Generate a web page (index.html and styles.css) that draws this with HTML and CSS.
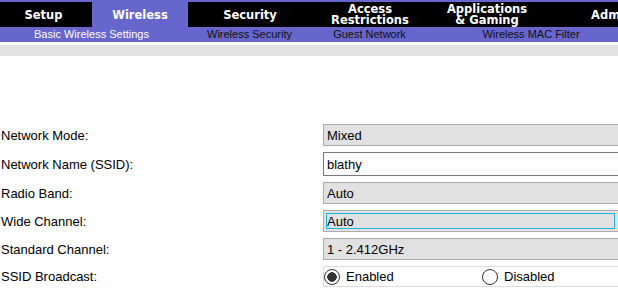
FILE: index.html
```html
<!DOCTYPE html>
<html lang="en">
<head>
    <meta charset="UTF-8">
    <title>Basic Wireless Settings</title>
    <link rel="stylesheet" href="styles.css">
</head>
<body>
    <div class="header">
        <div class="tabs">
            <div class="tab one t-setup">Setup</div>
            <div class="tab one active t-wireless">Wireless</div>
            <div class="tab one t-security">Security</div>
            <div class="tab t-access">Access<br>Restrictions</div>
            <div class="tab t-apps">Applications<br>&amp; Gaming</div>
            <div class="tab one t-admin">Administration</div>
        </div>
        <div class="subnav">
            <a class="sub current s1">Basic Wireless Settings</a>
            <a class="sub s2">Wireless Security</a>
            <a class="sub s3">Guest Network</a>
            <a class="sub s4">Wireless MAC Filter</a>
        </div>
    </div>
    <div class="bar"></div>

    <form class="settings">
        <div class="row">
            <label>Network Mode:</label>
            <select class="field"><option>Mixed</option></select>
        </div>
        <div class="row">
            <label>Network Name (SSID):</label>
            <input type="text" class="field text" value="blathy">
        </div>
        <div class="row">
            <label>Radio Band:</label>
            <select class="field"><option>Auto</option></select>
        </div>
        <div class="row">
            <label>Wide Channel:</label>
            <select class="field focus"><option>Auto</option></select>
        </div>
        <div class="row">
            <label>Standard Channel:</label>
            <select class="field"><option>1 - 2.412GHz</option></select>
        </div>
        <div class="row">
            <label>SSID Broadcast:</label>
            <div class="field radios">
                <label class="opt"><input type="radio" name="ssid" checked> Enabled</label>
                <label class="opt"><input type="radio" name="ssid"> Disabled</label>
            </div>
        </div>
    </form>
</body>
</html>
```

FILE: styles.css
```css
*{
    margin: 0;
    padding: 0;
    box-sizing: border-box;
}
html, body{
    overflow: hidden;
}
body{
    width: 618px;
    background-color: #ffffff;
    font-family: "Liberation Sans", Arial, sans-serif;
    color: #000;
}

/* top tabs */
.header{
    background-color: #6666cc;
    padding-top: 2px;
}
.tabs{
    display: flex;
    height: 25px;
    white-space: nowrap;
    overflow: hidden;
}
.tab{
    flex: none;
    display: flex;
    align-items: center;
    justify-content: center;
    text-align: center;
    background-color: #000;
    color: #fff;
    font-family: "DejaVu Sans", Verdana, sans-serif;
    font-weight: bold;
    font-size: 11.5px;
    line-height: 11.5px;
}
.tab.one{
    padding-top: 3px;
}
.tab.active{
    background-color: #6666cc;
}
.t-setup{ width: 92px; padding-right: 5px; }
.t-wireless{ width: 96px; }
.t-security{ width: 124px; }
.t-access{ width: 116px; padding-top: 1px; }
.t-apps{ width: 118px; padding-top: 1px; }
.t-admin{ width: 188px; justify-content: flex-start; padding-left: 45px; }

.subnav{
    display: flex;
    height: 15px;
    white-space: nowrap;
    overflow: hidden;
}
.sub{
    flex: none;
    text-align: center;
    font-size: 11px;
    line-height: 15px;
    color: #111;
}
.sub.current{
    color: #fff;
}
.s1{ width: 183px; }
.s2{ width: 133px; }
.s3{ width: 107px; }
.s4{ width: 216px; }

.bar{
    margin-top: 3px;
    height: 11px;
    background-color: #e3e3e3;
}

/* form */
.settings{
    margin-top: 68px;
    display: flex;
    flex-direction: column;
    gap: 6px;
}
.row{
    display: flex;
    align-items: center;
    font-size: 13px;
}
.row > label{
    width: 323px;
    flex: none;
    padding-left: 1px;
}
.field{
    flex: none;
    width: 295px;
    height: 22px;
    font-family: "Liberation Sans", Arial, sans-serif;
    font-size: 13px;
    color: #000;
    padding: 0 3px;
}
select.field{
    appearance: none;
    -webkit-appearance: none;
    background-color: #e1e1e1;
    border: 1px solid #adadad;
    border-right: none;
    border-radius: 0;
}
.field.text{
    height: 24px;
    background-color: #fff;
    border: 1px solid #7a7a7a;
    border-right: none;
    outline: none;
}
.field.focus{
    outline: 1px solid #1fb4e0;
    outline-offset: -4px;
}
.radios{
    height: 21px;
    display: grid;
    grid-template-columns: 158px 137px;
    align-items: center;
    padding: 0;
    border: 1px solid #dedede;
    border-right: none;
}
.opt{
    display: flex;
    align-items: center;
    gap: 6px;
}
.opt input{
    appearance: none;
    -webkit-appearance: none;
    width: 16px;
    height: 16px;
    border: 1px solid #333;
    border-radius: 50%;
    background-color: #fff;
    margin: 0;
}
.opt input:checked{
    background: radial-gradient(circle, #333 0 4.5px, #fff 5px);
}
```
